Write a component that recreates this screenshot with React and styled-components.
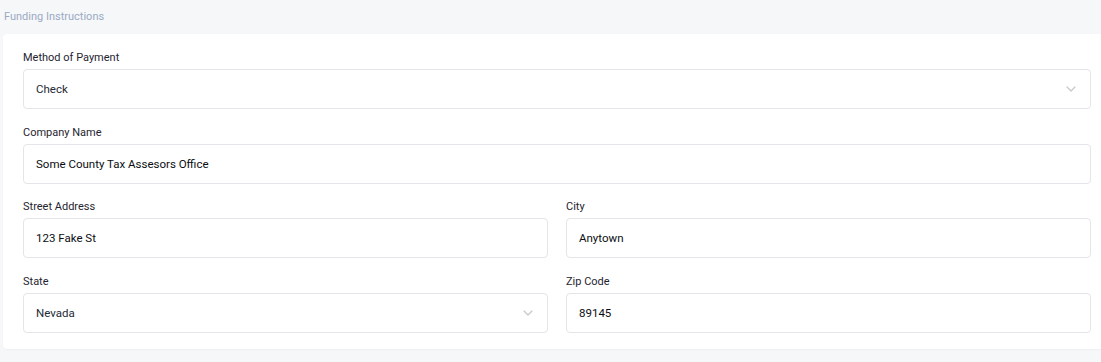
import React from 'react';
import styled, { createGlobalStyle } from 'styled-components';

const GlobalStyle = createGlobalStyle`
  html, body {
    margin: 0;
    padding: 0;
    background: #f6f7f9;
    font-family: Roboto, 'Noto Sans', sans-serif;
  }
`;

const Wrapper = styled.div`
  width: 1101px;
  height: 362px;
  overflow: hidden;
  background: #f6f7f9;
`;

const Title = styled.div`
  height: 34px;
  padding-left: 4px;
  display: flex;
  align-items: center;
  font-size: 11px;
  color: #9aaac4;
  box-sizing: border-box;
  padding-bottom: 2px;
`;

const Card = styled.section`
  margin-left: 3px;
  width: 1108px;
  box-sizing: border-box;
  padding: 17px 20px 16px;
  background: #fff;
  border-radius: 4px;
  box-shadow: 0 1px 2px rgba(15, 23, 42, 0.04);
  display: grid;
  grid-template-columns: 525px 525px;
  column-gap: 18px;
  row-gap: 16.6px;
`;

const Field = styled.div`
  display: flex;
  flex-direction: column;
  gap: 4px;
  grid-column: ${(props) => (props.full ? '1 / -1' : 'auto')};
`;

const Label = styled.label`
  font-size: 11px;
  line-height: 14px;
  color: #1f2430;
`;

const Box = styled.div`
  height: 40px;
  box-sizing: border-box;
  border: 1px solid #e3e5e9;
  border-radius: 4px;
  padding: 0 12px;
  display: flex;
  align-items: center;
  justify-content: space-between;
  font-size: 11.5px;
  font-weight: 400;
  color: ${(props) => (props.select ? '#242a36' : '#0b0d12')};
`;

const Chevron = () => (
  <svg width="10" height="6" viewBox="0 0 10 6" fill="none" style={{ marginRight: 2 }}>
    <path d="M1 1l4 4 4-4" stroke="#c6c9ce" strokeWidth="1.3" strokeLinecap="round" strokeLinejoin="round" />
  </svg>
);

const fields = [
  { label: 'Method of Payment', value: 'Check', select: true, full: true },
  { label: 'Company Name', value: 'Some County Tax Assesors Office', full: true },
  { label: 'Street Address', value: '123 Fake St' },
  { label: 'City', value: 'Anytown' },
  { label: 'State', value: 'Nevada', select: true },
  { label: 'Zip Code', value: '89145' },
];

const App = () => {
  return (
    <Wrapper>
      <GlobalStyle />
      <Title>Funding Instructions</Title>
      <Card>
        {fields.map((f) => (
          <Field key={f.label} full={f.full}>
            <Label>{f.label}</Label>
            <Box select={f.select}>
              <span>{f.value}</span>
              {f.select && <Chevron />}
            </Box>
          </Field>
        ))}
      </Card>
    </Wrapper>
  );
};

export default App;
